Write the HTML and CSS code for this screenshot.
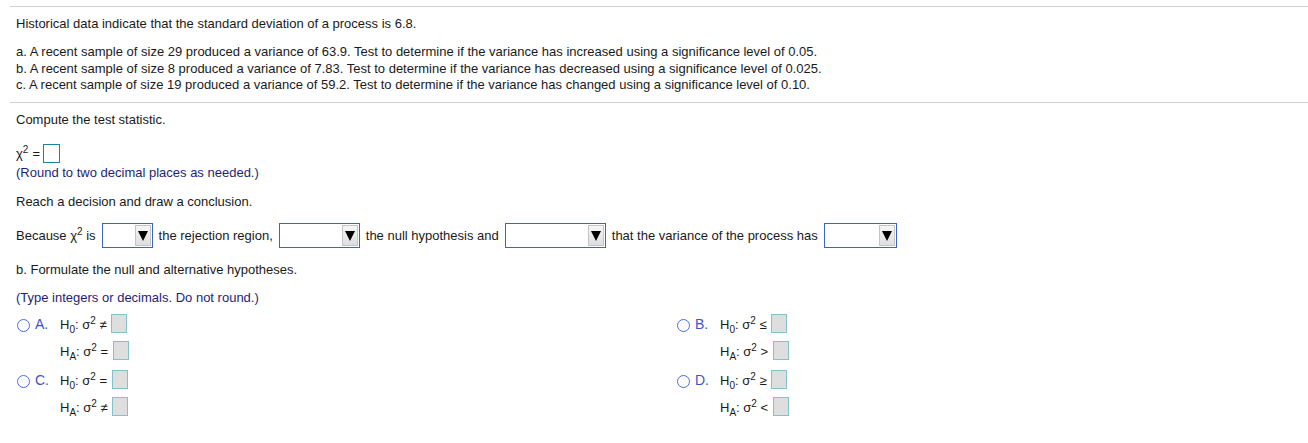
FILE: index.html
```html
<!DOCTYPE html>
<html>
<head>
<meta charset="utf-8">
<link rel="stylesheet" href="styles.css">
</head>
<body>
<div class="page">
  <section class="intro">
    <p class="lead">Historical data indicate that the standard deviation of a process is 6.8.</p>
    <div class="parts">
      <div>a. A recent sample of size 29 produced a variance of 63.9. Test to determine if the variance has increased using a significance level of 0.05.</div>
      <div>b. A recent sample of size 8 produced a variance of 7.83. Test to determine if the variance has decreased using a significance level of 0.025.</div>
      <div>c. A recent sample of size 19 produced a variance of 59.2. Test to determine if the variance has changed using a significance level of 0.10.</div>
    </div>
  </section>
  <section class="work">
    <p class="step">Compute the test statistic.</p>
    <div class="chi-row"><span class="chi">χ<sup>2</sup></span><span class="eq">=</span><span class="answer"></span></div>
    <p class="note round">(Round to two decimal places as needed.)</p>
    <p class="step reach">Reach a decision and draw a conclusion.</p>
    <div class="because">
      <span>Because <span class="chi">χ<sup>2</sup></span> is</span>
      <span class="dd w50"><span class="btn"></span></span>
      <span>the rejection region,</span>
      <span class="dd w80"><span class="btn"></span></span>
      <span>the null hypothesis and</span>
      <span class="dd w100"><span class="btn"></span></span>
      <span>that the variance of the process has</span>
      <span class="dd w72"><span class="btn"></span></span>
    </div>
    <p class="step formulate">b. Formulate the null and alternative hypotheses.</p>
    <p class="note type">(Type integers or decimals. Do not round.)</p>
    <div class="options">
      <div class="opt">
        <span class="radio"></span><span class="letter">A.</span>
        <div class="hyp">
          <div class="hrow">H<sub>0</sub>: σ<sup>2</sup> ≠ <span class="box"></span></div>
          <div class="hrow">H<sub>A</sub>: σ<sup>2</sup> = <span class="box"></span></div>
        </div>
      </div>
      <div class="opt">
        <span class="radio"></span><span class="letter">B.</span>
        <div class="hyp">
          <div class="hrow">H<sub>0</sub>: σ<sup>2</sup> ≤ <span class="box"></span></div>
          <div class="hrow">H<sub>A</sub>: σ<sup>2</sup> &gt; <span class="box"></span></div>
        </div>
      </div>
      <div class="opt">
        <span class="radio"></span><span class="letter">C.</span>
        <div class="hyp">
          <div class="hrow">H<sub>0</sub>: σ<sup>2</sup> = <span class="box"></span></div>
          <div class="hrow">H<sub>A</sub>: σ<sup>2</sup> ≠ <span class="box"></span></div>
        </div>
      </div>
      <div class="opt">
        <span class="radio"></span><span class="letter">D.</span>
        <div class="hyp">
          <div class="hrow">H<sub>0</sub>: σ<sup>2</sup> ≥ <span class="box"></span></div>
          <div class="hrow">H<sub>A</sub>: σ<sup>2</sup> &lt; <span class="box"></span></div>
        </div>
      </div>
    </div>
  </section>
</div>
</body>
</html>
```
FILE: styles.css
```css
html, body {
  margin: 0;
  padding: 0;
  background: #fff;
}
body {
  font-family: "Liberation Sans", Arial, sans-serif;
  font-size: 13px;
  color: #1a1a1a;
}
p { margin: 0; }
.page {
  margin-left: 10px;
  padding-top: 6px;
}
.intro {
  border-top: 1px solid #cfd3dd;
  padding: 9px 0 8px 6px;
}
.lead {
  line-height: 16px;
}
.parts {
  margin-top: 12px;
  line-height: 16.5px;
}
.work {
  border-top: 1px solid #cfd3dd;
  padding-left: 6px;
  padding-top: 9px;
}
.step { line-height: 16px; }
.chi-row {
  margin-top: 16px;
  display: flex;
  align-items: center;
  height: 19px;
}
.chi { font-style: normal; }
.eq { margin: 0 3px 0 4px; }
sup {
  font-size: 10px;
  vertical-align: 5px;
  line-height: 0;
}
sub {
  font-size: 10px;
  vertical-align: -4px;
  line-height: 0;
}
.answer {
  display: inline-block;
  box-sizing: border-box;
  width: 17px;
  height: 19px;
  border: 1px solid #14879e;
  background: #fff;
}
.note {
  color: #1e1e78;
  line-height: 16px;
}
.round { margin-top: 2px; }
.reach { margin-top: 13px; }
.because {
  margin-top: 13px;
  display: flex;
  align-items: center;
  gap: 6px;
  height: 25px;
  white-space: nowrap;
}
.dd {
  display: inline-block;
  position: relative;
  height: 25px;
  box-sizing: border-box;
  border: 1px solid #3d63c6;
  background: #fff;
}
.w50 { width: 51px; }
.w80 { width: 81px; }
.w100 { width: 101px; }
.w72 { width: 73px; }
.btn {
  position: absolute;
  right: 1px;
  top: 1px;
  bottom: 1px;
  width: 16px;
  box-sizing: border-box;
  border: 1px solid #c4c4c4;
  background: linear-gradient(#f6f6f6, #dedede);
}
.btn::after {
  content: "";
  position: absolute;
  left: 2px;
  top: 5px;
  border-left: 5px solid transparent;
  border-right: 5px solid transparent;
  border-top: 10px solid #000;
}
.formulate { margin-top: 14px; }
.type { margin-top: 12px; }
.options {
  margin-top: 5px;
  display: grid;
  grid-template-columns: 660px 1fr;
  row-gap: 2px;
  padding-left: 1px;
}
.opt {
  display: flex;
  align-items: flex-start;
}
.radio {
  width: 13px;
  height: 13px;
  box-sizing: border-box;
  border: 1px solid #4b6fd6;
  border-radius: 50%;
  margin-top: 8px;
}
.letter {
  color: #3b55c7;
  font-size: 14px;
  margin-left: 5px;
  width: 25px;
  line-height: 26px;
}
.hyp {
  display: flex;
  flex-direction: column;
}
.hrow {
  height: 27px;
  line-height: 27px;
  white-space: pre;
}
.box {
  display: inline-block;
  vertical-align: middle;
  width: 16px;
  height: 19px;
  box-sizing: border-box;
  border: 1px solid #86c0cc;
  background: #dedede;
  margin-left: 1px;
  margin-top: -3px;
}
```
